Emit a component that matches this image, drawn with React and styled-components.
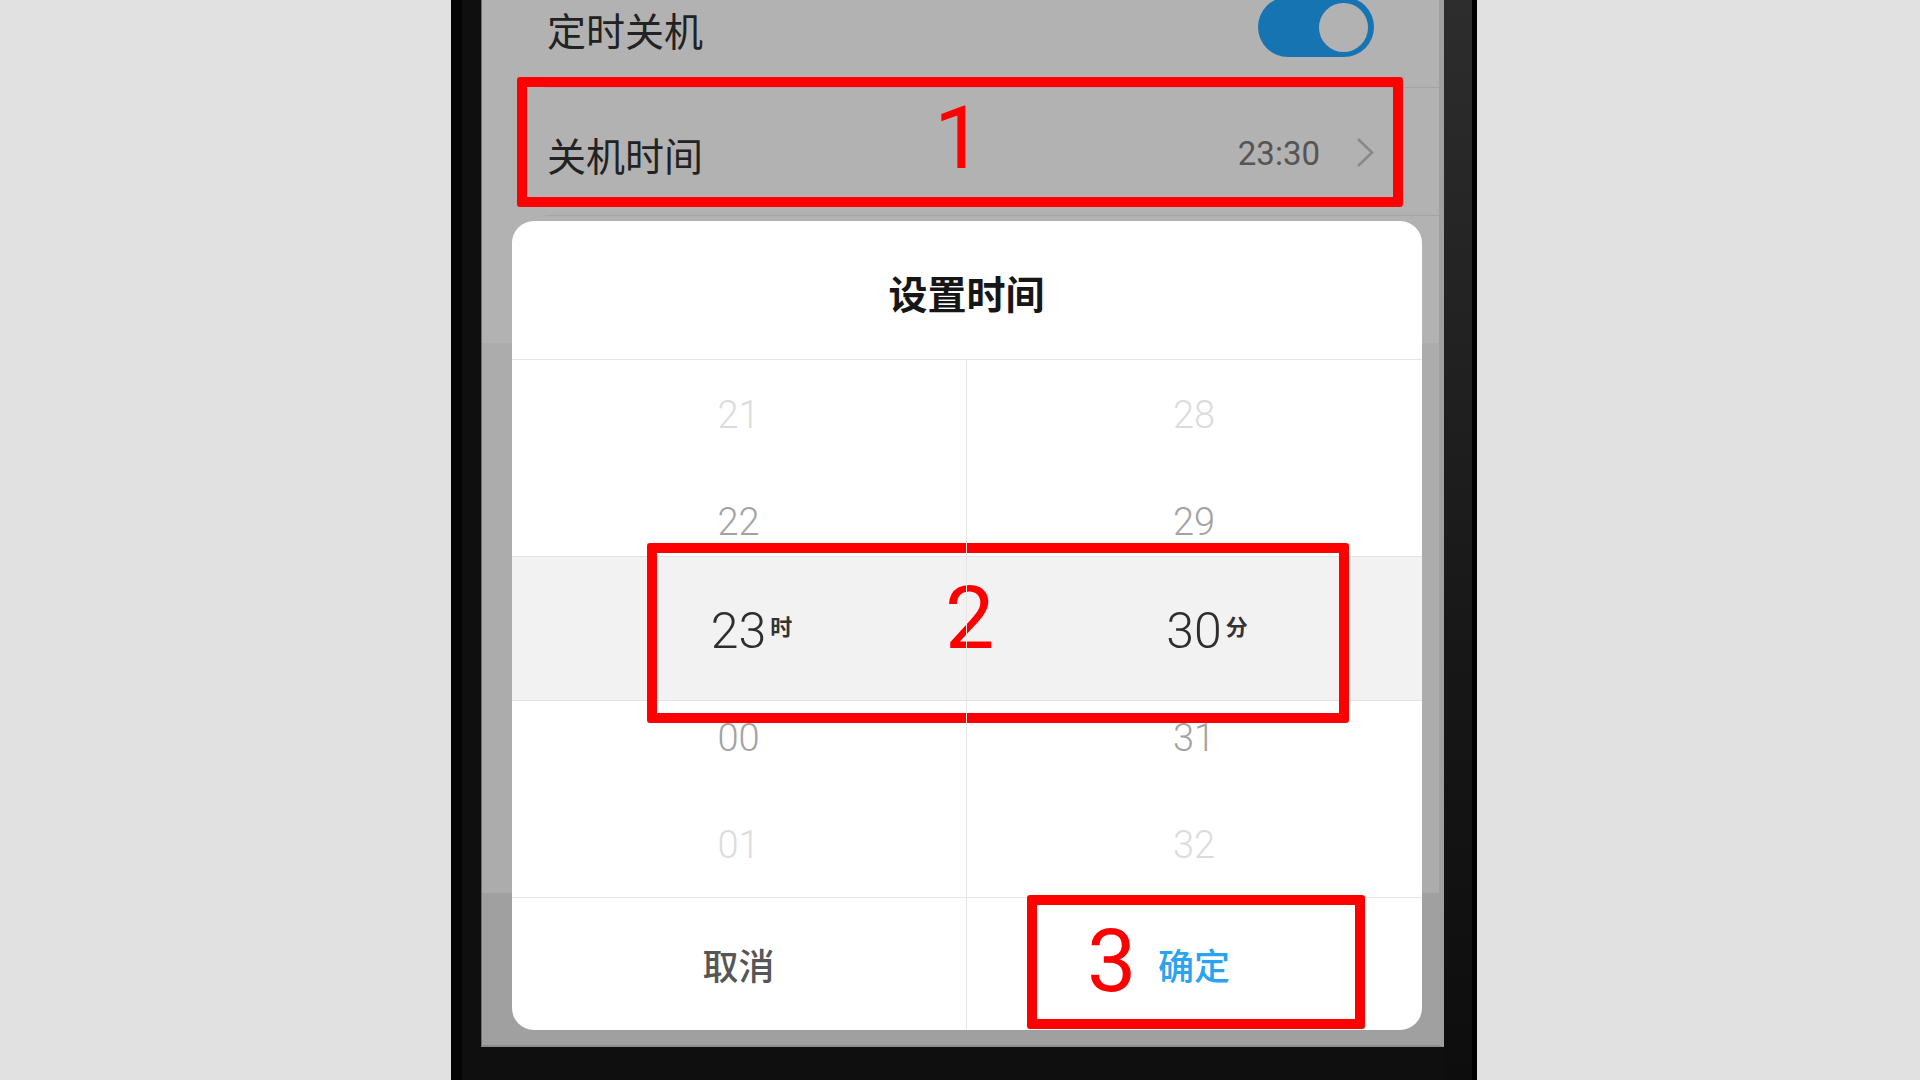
import React from 'react';
import styled, { createGlobalStyle } from 'styled-components';

const CJK = `"Noto Sans CJK SC", "Noto Sans", sans-serif`;
const DIGITS = `Roboto, "Noto Sans", sans-serif`;

const GlobalStyle = createGlobalStyle`
  html, body {
    margin: 0;
    padding: 0;
    background: #e1e1e1;
    font-family: ${CJK};
  }
  * {
    box-sizing: border-box;
  }
`;

const Page = styled.div`
  position: relative;
  width: 1920px;
  height: 1080px;
  overflow: hidden;
  display: flex;
  align-items: flex-start;
  padding-left: 451px;
  background: #e1e1e1;
`;

// phone body: dark bezel, the right edge catches a little light
const Phone = styled.div`
  width: 1026px;
  padding: 0 28px 40px 19px;
  border-left: 11px solid #050505;
  border-right: 5px solid #000;
  background:
    linear-gradient(to right, #0f0f0f 0, #0f0f0f calc(100% - 28px), transparent calc(100% - 28px)),
    linear-gradient(to bottom, #2d2d2d, #171717 60%, #0d0d0d);
`;

const Screen = styled.div`
  position: relative;
  width: 963px;
  display: flex;
  flex-direction: column;
  border-left: 1px solid #6c6c6c;
  border-right: 5px solid #a0a0a0;
  border-bottom: 2px solid #8c8c8c;
  background: #f7f7f7;
`;

const SettingsList = styled.div`
  background: #fff;
`;

const Row = styled.div`
  position: relative;
  height: ${p => p.$h}px;
  display: flex;
  align-items: center;
  padding: 0 65px ${p => p.$pb || 0}px;

  &::after {
    content: '';
    display: ${p => (p.$last ? 'none' : 'block')};
    position: absolute;
    left: 63px;
    right: 0;
    bottom: 0;
    height: 1px;
    background: #ececec;
  }
`;

const Label = styled.span`
  flex: 1;
  font-family: ${CJK};
  font-size: 39px;
  line-height: 1;
  color: #323232;
  padding-top: 4px;
`;

const Value = styled.span`
  font-family: ${DIGITS};
  font-size: 33px;
  line-height: 1;
  color: #7a7a7a;
  margin-right: 36px;
  padding-top: 3px;
`;

const Toggle = styled.div`
  flex-shrink: 0;
  width: 116px;
  height: 60px;
  border-radius: 30px;
  background: #22a6ff;
  display: flex;
  align-items: center;
  justify-content: flex-end;
  padding-right: 6px;
`;

const Knob = styled.div`
  width: 49px;
  height: 49px;
  border-radius: 50%;
  background: #fff;
`;

const PageFill = styled.div`
  height: 550px;
  background: #f7f7f7;
`;

const BottomBar = styled.div`
  height: 152px;
  background: #e5e5e5;
`;

// dimmed backdrop that also holds the bottom sheet
const Scrim = styled.div`
  position: absolute;
  inset: 0;
  background: rgba(0, 0, 0, 0.3);
  display: flex;
  align-items: flex-end;
  padding: 0 17.5px 15px 29.5px;
`;

const Dialog = styled.div`
  width: 100%;
  height: 809px;
  background: #fff;
  border-radius: 22px;
  display: flex;
  flex-direction: column;
  overflow: hidden;
`;

const DialogHeader = styled.div`
  height: 139px;
  flex-shrink: 0;
  display: flex;
  align-items: center;
  justify-content: center;
  padding-top: 4px;
  border-bottom: 1px solid #e6e6e6;
`;

const DialogTitle = styled.h2`
  margin: 0;
  font-family: ${CJK};
  font-size: 39px;
  font-weight: 700;
  line-height: 1;
  color: #161616;
`;

const Picker = styled.div`
  position: relative;
  height: 537px;
  flex-shrink: 0;
  display: grid;
  grid-template-columns: 1fr 1fr;
`;

const SelectionBand = styled.div`
  position: absolute;
  left: 0;
  right: 0;
  top: 196px;
  height: 145px;
  background: #f2f2f2;
  border-top: 1px solid #e2e2e2;
  border-bottom: 1px solid #e2e2e2;
`;

const Wheel = styled.div`
  position: relative;
  z-index: 1;
  display: flex;
  flex-direction: column;
  border-right: ${p => (p.$divider ? '1px solid #e6e6e6' : 'none')};
`;

const tierStyles = {
  far: 'font-size: 38px; color: #dcdcdc;',
  near: 'font-size: 38px; color: #a3a3a3;',
  active: 'font-size: 50px; color: #2e2e2e; padding-top: 6px;',
};

const WheelItem = styled.div`
  flex: 1;
  display: flex;
  align-items: center;
  justify-content: center;
  padding-top: 3px;
  font-family: ${DIGITS};
  font-weight: 300;
  line-height: 1;
  ${p => tierStyles[p.$tier]}
`;

const Current = styled.span`
  position: relative;
`;

const Unit = styled.span`
  position: absolute;
  left: calc(100% + 4px);
  top: 8px;
  font-family: ${CJK};
  font-size: 22px;
  font-weight: 700;
  line-height: 1;
  color: #333;
  white-space: nowrap;
`;

const Footer = styled.div`
  flex: 1;
  display: grid;
  grid-template-columns: 1fr 1fr;
  border-top: 1px solid #e6e6e6;
`;

const FooterButton = styled.button`
  border: none;
  background: transparent;
  padding: 0;
  font-family: ${CJK};
  font-size: 36px;
  font-weight: 500;
  line-height: 1;
  color: ${p => (p.$primary ? '#2aa3f2' : '#565656')};
  border-right: ${p => (p.$divider ? '1px solid #e6e6e6' : 'none')};
`;

// red step markers drawn over the whole shot
const Marks = styled.div`
  position: absolute;
  inset: 0;
  pointer-events: none;
`;

const MarkBox = styled.div`
  position: absolute;
  left: ${p => p.$x}px;
  top: ${p => p.$y}px;
  width: ${p => p.$w}px;
  height: ${p => p.$h}px;
  border: 10px solid #ff0000;
  border-radius: 3px;
`;

const MarkNumber = styled.span`
  position: absolute;
  left: ${p => p.$x}px;
  top: ${p => p.$y}px;
  font-family: ${DIGITS};
  font-size: ${p => p.$size}px;
  line-height: 1;
  color: #ff0000;
`;

const Chevron = () => (
  <svg width="18" height="31" viewBox="0 0 18 31">
    <path d="M2 2 L16 15.5 L2 29" fill="none" stroke="#c4c4c4" strokeWidth="2.6" />
  </svg>
);

const hours = [
  { v: '21', tier: 'far' },
  { v: '22', tier: 'near' },
  { v: '23', tier: 'active' },
  { v: '00', tier: 'near' },
  { v: '01', tier: 'far' },
];

const minutes = [
  { v: '28', tier: 'far' },
  { v: '29', tier: 'near' },
  { v: '30', tier: 'active' },
  { v: '31', tier: 'near' },
  { v: '32', tier: 'far' },
];

function TimeWheel({ items, unit, divider }) {
  return (
    <Wheel $divider={divider}>
      {items.map(item => (
        <WheelItem key={item.v} $tier={item.tier}>
          {item.tier === 'active' ? (
            <Current>
              {item.v}
              <Unit>{unit}</Unit>
            </Current>
          ) : (
            item.v
          )}
        </WheelItem>
      ))}
    </Wheel>
  );
}

export default function App() {
  return (
    <>
      <GlobalStyle />
      <Page>
        <Phone>
          <Screen>
            <SettingsList>
              {/* first row is scrolled partly out of view */}
              <Row $h={88} $pb={34}>
                <Label>定时关机</Label>
                <Toggle>
                  <Knob />
                </Toggle>
              </Row>
              <Row $h={128}>
                <Label>关机时间</Label>
                <Value>23:30</Value>
                <Chevron />
              </Row>
              <Row $h={127} $last />
            </SettingsList>
            <PageFill />
            <BottomBar />

            <Scrim>
              <Dialog>
                <DialogHeader>
                  <DialogTitle>设置时间</DialogTitle>
                </DialogHeader>
                <Picker>
                  <SelectionBand />
                  <TimeWheel items={hours} unit="时" divider />
                  <TimeWheel items={minutes} unit="分" />
                </Picker>
                <Footer>
                  <FooterButton $divider>取消</FooterButton>
                  <FooterButton $primary>确定</FooterButton>
                </Footer>
              </Dialog>
            </Scrim>
          </Screen>
        </Phone>

        <Marks>
          <MarkBox $x={517} $y={77} $w={886} $h={130} />
          <MarkNumber $x={934} $y={94} $size={88}>1</MarkNumber>
          <MarkBox $x={647} $y={543} $w={702} $h={180} />
          <MarkNumber $x={945} $y={574} $size={88}>2</MarkNumber>
          <MarkBox $x={1027} $y={895} $w={338} $h={134} />
          <MarkNumber $x={1087} $y={917} $size={88}>3</MarkNumber>
        </Marks>
      </Page>
    </>
  );
}
